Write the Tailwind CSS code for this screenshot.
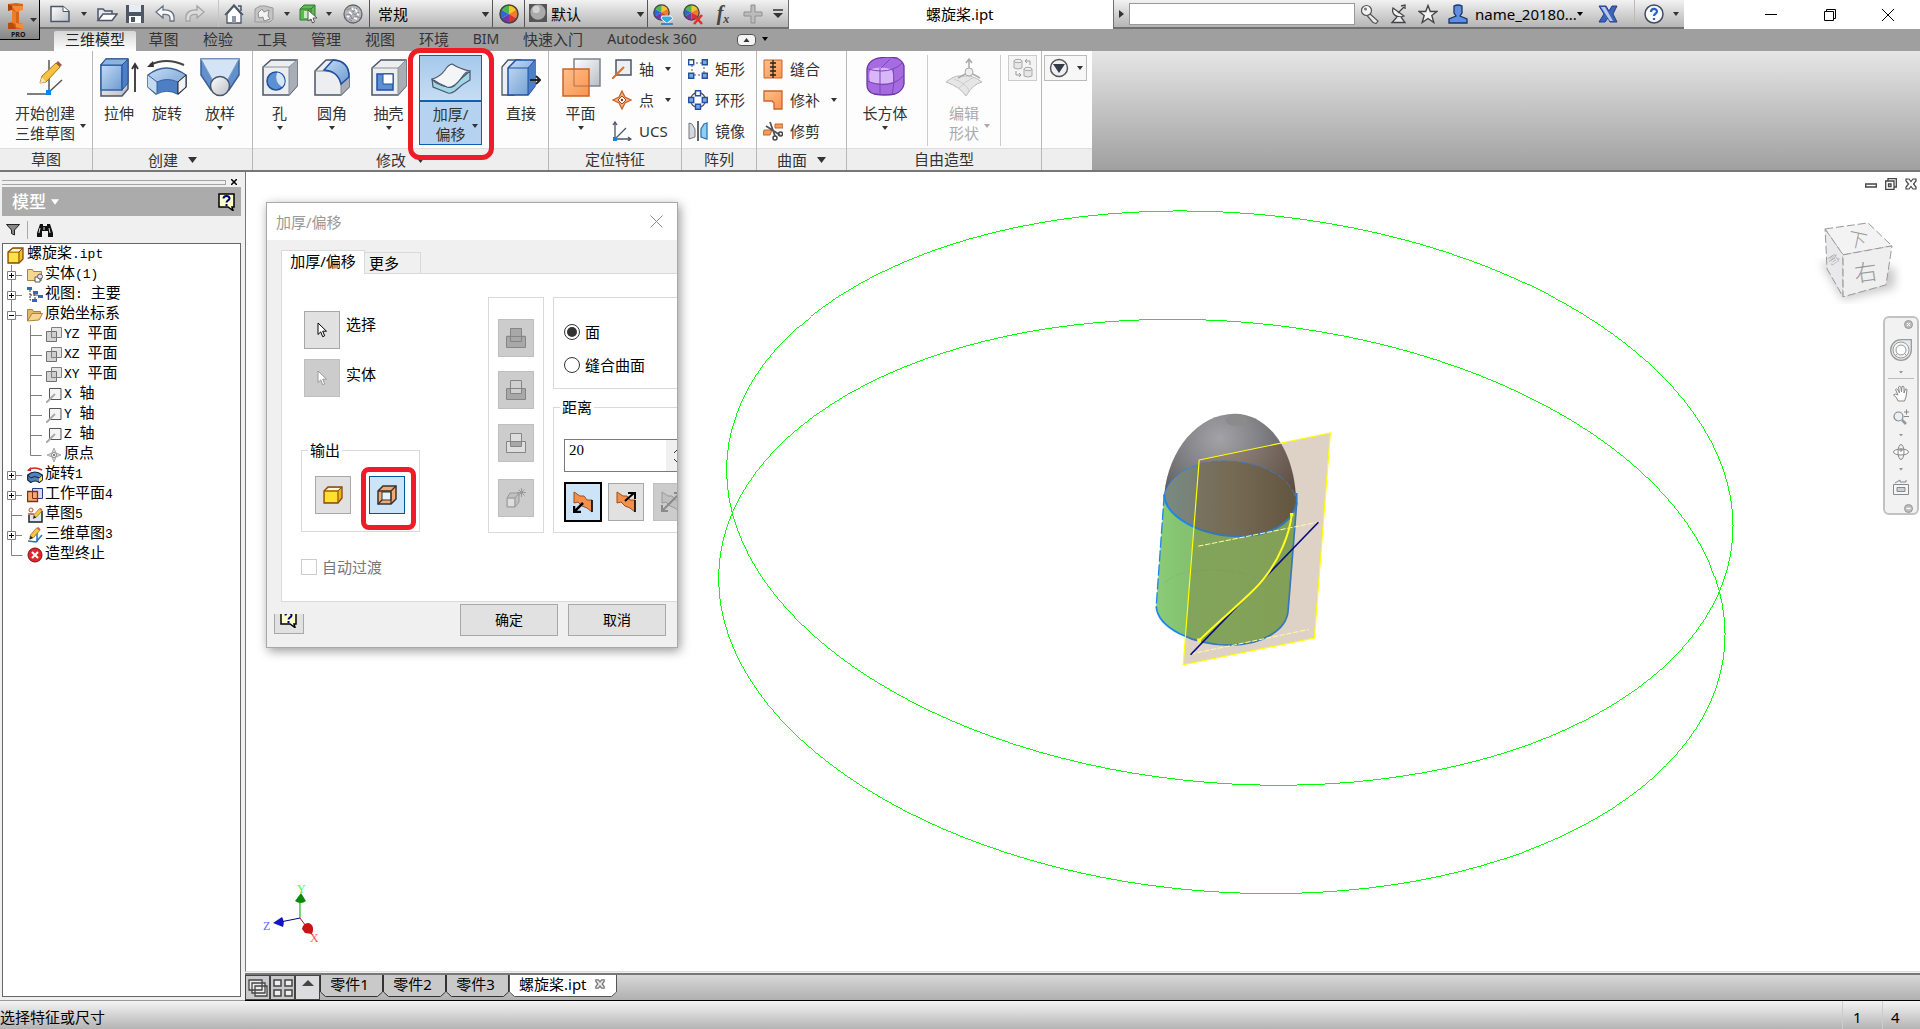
<!DOCTYPE html>
<html lang="zh-CN">
  <head>
    <meta charset="UTF-8" />
    <meta name="viewport" content="width=device-width, initial-scale=1.0" />
    <title>螺旋桨.ipt</title>
    <script src="https://cdn.jsdelivr.net/npm/@tailwindcss/browser@4"></script>
  </head>
  <body class="h-screen flex flex-col overflow-hidden bg-[#f0f0f0] text-[15px] leading-5 text-[#222] font-['Noto_Sans','Noto_Sans_CJK_SC',sans-serif]">
    <!-- shared icons -->
    <svg class="absolute w-0 h-0">
      <defs>
        <linearGradient id="blue" x1="0" y1="0" x2="1" y2="1"><stop offset="0" stop-color="#c4dcf5" /><stop offset="1" stop-color="#6d9ad0" /></linearGradient>
        <linearGradient id="gray" x1="0" y1="0" x2="1" y2="1"><stop offset="0" stop-color="#ffffff" /><stop offset="1" stop-color="#b9bdc4" /></linearGradient>
        <linearGradient id="orange" x1="0" y1="0" x2="1" y2="1"><stop offset="0" stop-color="#ffc08a" /><stop offset="1" stop-color="#f89450" /></linearGradient>
      </defs>
      <symbol id="down" viewBox="0 0 6 4"><path d="M0 0h6L3 4z" fill="currentColor" /></symbol>
      <symbol id="plus" viewBox="0 0 22 20"><path d="M8.500 0v6M8.500 14v6M12 10.500h7" stroke="#808080" /><path d="M4.500 6.500h8v8h-8z" fill="#fff" stroke="#808080" /><path d="M6 10.500h5M8.500 8v5" stroke="#000" /></symbol>
      <symbol id="minus" viewBox="0 0 22 20"><path d="M8.500 0v6M8.500 14v6M12 10.500h7" stroke="#808080" /><path d="M4.500 6.500h8v8h-8z" fill="#fff" stroke="#808080" /><path d="M6 10.500h5" stroke="#000" /></symbol>
      <symbol id="leaf" viewBox="0 0 22 20"><path d="M8.500 0v20M9 10.500h10" stroke="#808080" /></symbol>
      <symbol id="end" viewBox="0 0 22 20"><path d="M8.500 0v10.500h11" stroke="#808080" fill="none" /></symbol>
      <symbol id="child" viewBox="0 0 41 20"><path d="M8.500 0v20M27.500 0v20M28 10.500h11" stroke="#808080" /></symbol>
      <symbol id="child-end" viewBox="0 0 41 20"><path d="M8.500 0v20M27.500 0v10.500h11" stroke="#808080" fill="none" /></symbol>
      <symbol id="t-plane" viewBox="0 0 16 16"><path d="M5.500 .5h10v10h-10z" fill="#e4e4e4" stroke="#808080" /><path d="M.5 4.500h10v10H.5z" fill="#c8c8c8" fill-opacity=".8" stroke="#707070" /><path d="M5.500 4v6.500H11" stroke="#808080" fill="none" /></symbol>
      <symbol id="t-axis" viewBox="0 0 16 16"><path d="M3.500 1.500h11.500v11H3.500z" fill="#f4f4f4" stroke="#555" /><path d="M0 16l9-9" stroke="#aaa" stroke-width="2" /></symbol>
      <symbol id="pencil" viewBox="0 0 16 16"><path d="M4 9l7-8 3.500 3-7 8-4.500 2z" fill="#f8c83c" stroke="#8a5a10" stroke-width=".8" /><path d="M11 1l3.500 3 1-1.500L13 0z" fill="#c86450" /><path d="M3 14l1-4 3 2.500z" fill="#222" /></symbol>
      <symbol id="cursor" viewBox="0 0 10 16"><path d="M1 1v11.500l2.700-2.600 2 4.800 2-.9-2-4.600H9.500z" fill="#fff" stroke="currentColor" /></symbol>
      <symbol id="helpbook" viewBox="0 0 18 18"><path d="M1 1h15v13h-2l1 3.500L10 14H1z" fill="#ffffc8" stroke="#000" stroke-width="1.500" /><path d="M5.500 5.500c0-3.500 6-3.500 6 0 0 2-3 1.800-3 4M8.500 11v2" stroke="#00007f" stroke-width="2" fill="none" /></symbol>
      <symbol id="wheel" viewBox="0 0 20 20"><circle cx="10" cy="10" r="9" fill="#ddd" /><path d="M10 10V1a9 9 0 0 1 7.800 4.500z" fill="#f5c431" /><path d="M10 10l7.800-4.500a9 9 0 0 1 0 9z" fill="#ed7d2d" /><path d="M10 10l7.800 4.500A9 9 0 0 1 10 19z" fill="#d93030" /><path d="M10 10v9a9 9 0 0 1-7.800-4.500z" fill="#7138b0" /><path d="M10 10l-7.800 4.500a9 9 0 0 1 0-9z" fill="#2c68d8" /><path d="M10 10L2.200 5.500A9 9 0 0 1 10 1z" fill="#4db848" /><circle cx="10" cy="10" r="9" fill="none" stroke="#444" stroke-width="1.500" /></symbol>
      <symbol id="bool" viewBox="0 0 20 20"><path d="M.5 8.500h19v11H.5z" fill="none" stroke="#858585" /><path d="M4.500 .5h11v13h-11z" fill="none" stroke="#858585" /></symbol>
    </svg>

    <!-- title bar -->
    <header class="relative z-20 h-[29px] shrink-0 flex items-stretch bg-white">
      <button aria-label="应用程序菜单" class="absolute left-0 top-0 w-10 h-10 border border-black border-l-0 border-t-0 bg-linear-to-b from-[#dcdcdc] to-[#858585]">
        <svg viewBox="0 0 40 40" class="w-10 h-10">
          <path d="M8 4l8-1 7 1v6h-4v13l4 1v5H8v-6l4-1V10H8z" fill="#d9631d" /><path d="M8 4l4 2v4l-4 1z" fill="#a9420c" /><path d="M12 6h11v4l-7 2z" fill="#f58a38" /><path d="M12 10l4 2v12l-4-1z" fill="#ee7c2b" /><path d="M16 23l7 1v5l-7-2z" fill="#f58a38" /><path d="M8 23l5 0 3 6H8z" fill="#b84c10" />
          <path d="M30 18h7l-3.500 4z" fill="#333" />
          <text x="11" y="37" font-size="7" font-weight="bold" fill="#111">PRO</text>
        </svg>
      </button>
      <div class="w-[789px] pl-[46px] flex items-center bg-linear-to-b from-[#f2f2f2] to-[#b5b5b5] border-b-2 border-r border-[#707070]">
        <button aria-label="新建" class="w-7 flex justify-center"><svg viewBox="0 0 22 20" class="w-[22px] h-5"><path d="M2 2.500h12l6 5v10H2z" fill="url(#gray)" stroke="#4b5668" stroke-width="1.500" /><path d="M14 2.500v5h6" fill="#fff" stroke="#4b5668" /></svg></button>
        <button aria-label="新建选项" class="w-5 flex justify-center text-[#333]"><svg class="w-1.5 h-1"><use href="#down" /></svg></button>
        <button aria-label="打开" class="w-[26px] flex justify-center"><svg viewBox="0 0 22 20" class="w-[22px] h-5"><path d="M2 16V5h5l2 2h7v3" fill="#e5e8ee" stroke="#4b5668" stroke-width="1.500" /><path d="M2 16.500L7 10h14l-5 6.500z" fill="#fff" stroke="#4b5668" stroke-width="1.500" /></svg></button>
        <button aria-label="保存" class="w-[30px] flex justify-center"><svg viewBox="0 0 20 20" class="w-5 h-5"><path d="M1 1h18v18H1z" fill="#4c5664" /><path d="M4 1h12v7H4z" fill="#e8edf3" /><path d="M4 12h12v7H4z" fill="#fff" /><path d="M6 13h4v5H6z" fill="#4c5664" /></svg></button>
        <button aria-label="撤消" class="w-[30px] flex justify-center"><svg viewBox="0 0 20 20" class="w-5 h-5"><path d="M1 8l7-6v4c7-1 11 3 11 7v4h-4v-3c0-3-3-4-7-3.500V14z" fill="#f6f8fa" stroke="#6b7482" stroke-width="1.300" /></svg></button>
        <button aria-label="恢复" class="w-[30px] flex justify-center"><svg viewBox="0 0 20 20" class="w-5 h-5"><path d="M19 8l-7-6v4C5 5 1 9 1 13v4h4v-3c0-3 3-4 7-3.500V14z" fill="#dcdcdc" stroke="#a5a5a5" stroke-width="1.300" /></svg></button>
        <span class="w-[9px] h-full border-r border-[#c6c6c6]"></span>
        <button aria-label="主视图" class="w-[30px] flex justify-center"><svg viewBox="0 0 20 20" class="w-5 h-5"><path d="M3 10v9h14v-9l-7-8z" fill="#fff" stroke="#4b5668" stroke-width="1.300" /><path d="M1 11L10 1l9 10M14 2h3v5" stroke="#4b5668" stroke-width="1.500" fill="none" /><path d="M8 12h4v7H8z" fill="#8b96a8" /></svg></button>
        <button aria-label="更新" class="w-[30px] flex justify-center"><svg viewBox="0 0 20 20" class="w-5 h-5"><path d="M1 5l5-3h5l8 2v11l-3 3H1z" fill="#c4c4c4" stroke="#999" /><path d="M4 9l4-4 2 3 5-2-1 6 2 3-6 2-1-4-4 1z" fill="#f2f2f2" stroke="#8d8d8d" /></svg></button>
        <button aria-label="更新选项" class="w-4 flex justify-center text-[#333]"><svg class="w-1.5 h-1"><use href="#down" /></svg></button>
        <button aria-label="选择" class="w-[26px] flex justify-center"><svg viewBox="0 0 20 20" class="w-5 h-5"><path d="M2 5l4-4h11v11l-4 4H2z" fill="#5fb950" stroke="#2e7d32" /><path d="M2 5h11v11M13 5l4-4" stroke="#2e7d32" fill="none" /><path d="M6 7h5v7H6z" fill="#c9ebc2" /><path d="M10 6v11l3-2 1.500 4 2-1-1.500-4h4z" fill="#fff" stroke="#555" /></svg></button>
        <button aria-label="选择选项" class="w-4 flex justify-center text-[#333]"><svg class="w-1.5 h-1"><use href="#down" /></svg></button>
        <button aria-label="外观" class="w-8 flex justify-center"><svg viewBox="0 0 20 20" class="w-5 h-5"><circle cx="10" cy="10" r="9" fill="#b4b8bd" stroke="#666" stroke-width="1.300" /><path d="M4 6l4-2 2 4 4-4M3 11l4-1 2 5 4-3 4 2M8 8l4 3 4-3M6 15l3 2" stroke="#8a8a8a" fill="none" /><path d="M6 8l3 2M12 5l2 3M11 14l3 1M4 12l2 1M9 4l1 2M14 10l2 1" stroke="#fff" stroke-width="1.800" /></svg></button>
        <div class="relative w-[124px] h-full border-x border-[#555]">
          <select aria-label="材料" class="appearance-none w-full h-full pl-2 text-black"><option>常规</option></select>
          <svg class="absolute right-[2px] top-3 w-[9px] h-[5px] text-[#333] pointer-events-none"><use href="#down" /></svg>
        </div>
        <button aria-label="外观浏览器" class="w-[31px] flex justify-center"><svg class="w-5 h-5"><use href="#wheel" /></svg></button>
        <div class="relative w-[124px] h-full border-x border-[#555]">
          <select aria-label="外观" class="appearance-none w-full h-full pl-[26px] text-black"><option>默认</option></select>
          <svg viewBox="0 0 20 20" class="absolute left-[4px] top-1 w-[18px] h-[18px] pointer-events-none"><path d="M0 0h20v20H0z" fill="#555" /><circle cx="10" cy="9" r="8.500" fill="#aaa" /><circle cx="8" cy="6" r="4" fill="#d2d2d2" /></svg>
          <svg class="absolute right-[2px] top-3 w-[9px] h-[5px] text-[#333] pointer-events-none"><use href="#down" /></svg>
        </div>
        <button aria-label="调整外观" class="w-[30px] flex justify-center"><svg viewBox="0 0 22 22" class="w-[22px] h-[22px]"><use href="#wheel" width="17" height="17" x="1" y="1" /><path d="M10 13h9l2 2.500-6 5-6-5z" fill="#39a9e0" stroke="#fff" /><path d="M9 21h12" stroke="#1f6faf" stroke-width="1.500" /></svg></button>
        <button aria-label="清除外观" class="w-[30px] flex justify-center"><svg viewBox="0 0 22 22" class="w-[22px] h-[22px]"><use href="#wheel" width="17" height="17" x="1" y="1" /><path d="M12 12l8 9M20 12l-8 9" stroke="#d93232" stroke-width="2.500" /></svg></button>
        <button aria-label="参数" class="w-[30px] font-['Liberation_Serif',serif] italic font-bold text-[20px] text-[#444]">f<sub class="text-xs">x</sub></button>
        <button aria-label="添加" class="w-[30px] flex justify-center"><svg viewBox="0 0 20 20" class="w-5 h-5"><path d="M8 1h4v7h7v4h-7v7H8v-7H1V8h7z" fill="#bcbcbc" stroke="#8f8f8f" /></svg></button>
        <button aria-label="自定义" class="w-5 flex justify-center"><svg viewBox="0 0 10 9" class="w-[10px] h-[9px]"><path d="M0 1h10" stroke="#333" stroke-width="1.500" /><path d="M0 4h10L5 9z" fill="#333" /></svg></button>
      </div>
      <h1 class="flex-1 pl-[137px] pt-1 text-black whitespace-nowrap">螺旋桨.ipt</h1>
      <div class="w-[571px] flex items-center bg-linear-to-b from-[#f2f2f2] to-[#b5b5b5] border-b-2 border-l border-[#707070]">
        <button aria-label="展开搜索" class="w-[15px] flex justify-center"><svg viewBox="0 0 5 8" class="w-[5px] h-2"><path d="M0 0v8l5-4z" fill="#333" /></svg></button>
        <input aria-label="搜索" type="text" class="w-[226px] h-[22px] bg-white border border-[#999] px-1" />
        <button aria-label="登录密钥" class="w-[29px] flex justify-center"><svg viewBox="0 0 20 20" class="w-5 h-5"><path d="M9 9l9 8-2 2.500-3-1-6-7" fill="#e6e9ee" stroke="#555" stroke-width="1.200" /><circle cx="6.500" cy="6.500" r="5" fill="#f3f4f6" stroke="#555" stroke-width="1.200" /><circle cx="5.500" cy="5" r="1.500" fill="#777" /></svg></button>
        <button aria-label="通讯中心" class="w-[29px] flex justify-center"><svg viewBox="0 0 20 20" class="w-5 h-5"><path d="M4 4c-2 6 4 11 11 8z" fill="#f3f4f6" stroke="#444" stroke-width="1.300" /><path d="M9 9l6-6M12 2l4-1 0 4M8 13l-5 5.500h13L12 13" stroke="#444" fill="#e6e9ee" stroke-width="1.300" /></svg></button>
        <button aria-label="收藏夹" class="w-[30px] flex justify-center"><svg viewBox="0 0 20 20" class="w-5 h-5"><path d="M10 1.500l2.300 6H19l-5.200 4 2 7L10 14.500 4.200 18.500l2-7L1 7.500h6.700z" fill="#f3f4f6" stroke="#444" stroke-width="1.400" /></svg></button>
        <button class="flex items-center gap-[7px] w-[140px] pl-[5px] text-black whitespace-nowrap"><svg viewBox="0 0 20 20" class="w-5 h-5 shrink-0"><path d="M6 2q4-2 8 0v7l-2 3 7 3v4H1v-4l7-3-2-3z" fill="#5f8fe0" stroke="#1c3566" stroke-width="1.300" /></svg>name_20180...<svg class="w-1.5 h-1 -ml-[7px] shrink-0"><use href="#down" /></svg></button>
        <button aria-label="Exchange" class="w-[50px] flex justify-center"><svg viewBox="0 0 20 20" class="w-5 h-5"><path d="M1 2h7l3 5 3-5h5l-4 8 4 8h-7l-2-4-3 4H1l5-8z" fill="#3d62b8" stroke="#24408a" /><path d="M3 3h4l8 14h-3z" fill="#b9c9ee" /></svg></button>
        <span class="w-0.5 h-full border-r border-[#bbb]"></span>
        <button aria-label="帮助" class="w-[38px] flex justify-center"><svg viewBox="0 0 20 20" class="w-5 h-5"><circle cx="10" cy="10" r="9" fill="#f7f9fb" stroke="#444c5c" stroke-width="1.500" /><path d="M7 8c0-4 6-4 6-.5 0 2-3 2.300-3 4.500M10 14v2" stroke="#2962c4" stroke-width="2.200" fill="none" /></svg></button>
        <button aria-label="帮助选项" class="flex text-[#333]"><svg class="w-1.5 h-1"><use href="#down" /></svg></button>
      </div>
      <div class="w-[236px] flex justify-between pl-[81px] pr-[26px] items-center text-black">
        <button aria-label="最小化"><svg viewBox="0 0 12 12" class="w-3 h-3"><path d="M0 5.500h12" stroke="#000" /></svg></button>
        <button aria-label="还原"><svg viewBox="0 0 12 12" class="w-3 h-3"><path d="M.5 2.500h9v9h-9zM2.500 2.500v-2h9v9h-2" stroke="#000" fill="none" /></svg></button>
        <button aria-label="关闭"><svg viewBox="0 0 12 12" class="w-3 h-3"><path d="M0 0l12 12M12 0L0 12" stroke="#000" /></svg></button>
      </div>
    </header>

    <!-- ribbon tabs -->
    <nav class="h-[22px] shrink-0 flex items-end bg-[#9f9f9f] pl-[54px] text-[#333] whitespace-nowrap">
      <button class="w-[82px] h-5 pb-1 rounded-t-xs bg-linear-to-b from-[#d6d6d6] to-white text-[#222] flex items-center justify-center">三维模型</button>
      <button class="w-[55px] h-5 pb-1 flex items-center justify-center">草图</button>
      <button class="w-[54px] h-5 pb-1 flex items-center justify-center">检验</button>
      <button class="w-[54px] h-5 pb-1 flex items-center justify-center">工具</button>
      <button class="w-[54px] h-5 pb-1 flex items-center justify-center">管理</button>
      <button class="w-[54px] h-5 pb-1 flex items-center justify-center">视图</button>
      <button class="w-[54px] h-5 pb-1 flex items-center justify-center">环境</button>
      <button class="w-[50px] h-5 pb-1 flex items-center justify-center text-sm">BIM</button>
      <button class="w-[84px] h-5 pb-1 flex items-center justify-center">快速入门</button>
      <button class="w-[114px] h-5 pb-1 flex items-center justify-center text-sm">Autodesk 360</button>
      <button aria-label="最小化功能区" class="ml-7 mb-[5px] w-[19px] h-3 rounded-sm border border-[#555] bg-[#f4f4f4] flex items-center justify-center"><svg viewBox="0 0 6 4" class="w-[7px] h-1"><path d="M0 4h6L3 0z" fill="#333" /></svg></button>
      <button aria-label="功能区选项" class="ml-1.5 h-5 pb-1 text-black"><svg class="w-1.5 h-1"><use href="#down" /></svg></button>
    </nav>

    <!-- ribbon -->
    <section class="h-[121px] shrink-0 flex border-b-2 border-[#777] bg-linear-to-b from-[#e6e6e6] to-[#a0a0a0] text-[#333]">
      <div class="w-[93px] flex flex-col bg-[#fdfdfd] border-r border-[#b8b8b8]">
        <div class="flex-1 flex">
          <button class="relative w-[90px] pt-1.5 flex flex-col items-center">
            <svg viewBox="0 0 40 40" class="w-10 h-10"><path d="M24 3v34H2M24 35L37 23" stroke="#555" stroke-width="1.500" fill="none" /><path d="M15 26l2-7L31 6l4 4-14 15z" fill="#f5c242" stroke="#a9721b" /><path d="M31 6l2-2 4 4-2 2z" fill="#a05a4a" /><path d="M15 26l2-6 4 5z" fill="#f4e2c0" /><path d="M21 33h5v5h-5z" fill="#0a84e8" /></svg>
            <span class="mt-1.5">开始创建<br />三维草图</span>
            <svg class="absolute right-1 top-[73px] w-1.5 h-1"><use href="#down" /></svg>
          </button>
        </div>
        <h2 class="h-[22px] bg-[#eeeeee] border-t border-[#ddd] text-center">草图</h2>
      </div>

      <div class="w-40 flex flex-col bg-[#fdfdfd] border-r border-[#b8b8b8]">
        <div class="flex-1 flex items-start">
          <button class="w-[52px] pt-1.5 flex flex-col items-center"><svg viewBox="0 0 40 40" class="w-10 h-10"><path d="M2 8l5-6h22v30l-6 7H2z" fill="url(#gray)" stroke="#4b5668" stroke-width="1.500" /><path d="M2 8h21v25H2z" fill="url(#blue)" stroke="#2f62b0" stroke-width="1.500" /><path d="M2 8l5-6h22l-6 6z" fill="#8db4e0" stroke="#2350a0" /><path d="M23 8l6-6v24l-6 7z" fill="#4d7fc4" stroke="#2350a0" /><path d="M36 35V8M33 12l3-5 3 5" stroke="#333" stroke-width="1.800" fill="none" /></svg><span class="mt-1.5">拉伸</span></button>
          <button class="w-[44px] pt-1.5 flex flex-col items-center"><svg viewBox="0 0 40 40" class="w-10 h-10"><path d="M3 8q16-8 34 0" stroke="#444" stroke-width="2" fill="none" /><path d="M0 10l6-6 1 6z" fill="#333" /><path d="M1 18q18-14 38 0v12l-8 7q-11-6-22 0l-8-7z" fill="url(#blue)" stroke="#3a5f96" stroke-width="1.500" /><path d="M1 18l9 7v12l-9-7z" fill="#c4daf2" /><path d="M10 25q10-5 21 0v12q-10-6-21 0z" fill="#4d7fc4" /><path d="M1 18l9 7q10-5 21 0l8-7M10 25v12M31 25v12" stroke="#3a5f96" fill="none" /><path d="M31 25l8-7v12l-8 7z" fill="#f2f2f2" stroke="#222" /></svg><span class="mt-1.5">旋转</span></button>
          <button class="w-[62px] pt-1.5 flex flex-col items-center"><svg viewBox="0 0 40 40" class="w-10 h-10"><path d="M1 2h38v16L29 33H11L1 18z" fill="#6190cc" stroke="#3a5f96" stroke-width="1.500" /><path d="M1 2l12 22h14L39 2z" fill="#d3e4f6" stroke="#7d9dc8" /><circle cx="20" cy="29" r="9.500" fill="url(#gray)" stroke="#4b5668" stroke-width="1.500" /></svg><span class="mt-1.5">放样</span><svg class="mt-[3px] w-1.5 h-1"><use href="#down" /></svg></button>
        </div>
        <h2 class="h-[22px] bg-[#eeeeee] border-t border-[#ddd] flex items-center justify-center gap-2.5">创建 <svg class="w-[9px] h-1.5"><use href="#down" /></svg></h2>
      </div>

      <div class="relative w-[296px] flex flex-col bg-[#fdfdfd] border-r border-[#b8b8b8]">
        <div class="flex-1 flex items-start">
          <button class="w-[53px] pt-1.5 flex flex-col items-center"><svg viewBox="0 0 40 40" class="w-10 h-10"><path d="M3 10l8-7h26v26l-8 9H3z" fill="#eceef0" stroke="#4b5668" stroke-width="1.500" /><path d="M29 38V10l8-7v26z" fill="#a9adb5" /><path d="M3 10h26v28M29 10l8-7" stroke="#8b919c" fill="none" /><circle cx="16" cy="24" r="9" fill="#5d90d2" stroke="#1f4fa3" stroke-width="1.500" /><path d="M17 15.500a8.500 8.500 0 0 1 5 14.500q-8-5-5-14.500z" fill="#d5e6f8" /></svg><span class="mt-1.5">孔</span><svg class="mt-[3px] w-1.5 h-1"><use href="#down" /></svg></button>
          <button class="w-[52px] pt-1.5 flex flex-col items-center"><svg viewBox="0 0 40 40" class="w-10 h-10"><path d="M3 14L14 3h8q15 1 15 17v10l-8 8H3z" fill="#eceef0" stroke="#4b5668" stroke-width="1.500" /><path d="M29 38V27l8-7v10z" fill="#a9adb5" /><path d="M3 14h9q14 0 17 13v11" fill="none" stroke="#888" /><path d="M12 13L21 3q16 1 16 17l-8 7Q26 14 12 13z" fill="url(#blue)" stroke="#1f4fa3" stroke-width="1.500" /></svg><span class="mt-1.5">圆角</span><svg class="mt-[3px] w-1.5 h-1"><use href="#down" /></svg></button>
          <button class="w-[61px] pt-1.5 flex flex-col items-center"><svg viewBox="0 0 40 40" class="w-10 h-10"><path d="M3 11l9-8h25v26l-8 9H3z" fill="#eceef0" stroke="#4b5668" stroke-width="1.500" /><path d="M29 38V11l8-8v26z" fill="#a9adb5" /><path d="M3 11h26v27M29 11l8-8" stroke="#8b919c" fill="none" /><path d="M8 17h16v16H8z" fill="#5d90d2" stroke="#1f4fa3" stroke-width="1.500" /><path d="M14 17h10v10H14z" fill="#fff" stroke="#1f4fa3" /></svg><span class="mt-1.5">抽壳</span><svg class="mt-[3px] w-1.5 h-1"><use href="#down" /></svg></button>
          <button class="relative mt-1 w-[63px] h-[90px] flex flex-col items-center border border-[#0b62b4] bg-[#b5d3f0] text-[#333]">
            <span class="w-full h-[47px] pt-[3px] flex justify-center border-b-2 border-[#0b62b4] bg-linear-to-b from-[#a5c9ec] to-[#c6ddf3]"><svg viewBox="0 0 40 40" class="w-10 h-10"><path d="M1 20q4 6 16 8q3 1 6-1q7-8 16-15v9q-8 4-15 11-4 3-7 2L2 28z" fill="#9fd6e8" stroke="#4b5668" stroke-width="1.200" /><path d="M1 20q8-2 13-9 3-5 7-6 8 5 18 7-4 0-8 6-5 7-9 9-3 2-6 1Q8 25 1 20z" fill="#f4f5f6" stroke="#4b5668" stroke-width="1.200" /></svg></span>
            <span class="mt-0.5">加厚/<br />偏移</span>
            <svg class="absolute right-[3px] top-[68px] w-1.5 h-1"><use href="#down" /></svg>
            <span class="absolute z-10 -left-3 -right-[13px] -top-[8px] h-28 rounded-xl border-[5px] border-[#ee1c25] pointer-events-none"></span>
          </button>
          <button class="ml-3 w-[54px] pt-1.5 flex flex-col items-center"><svg viewBox="0 0 40 40" class="w-10 h-10"><path d="M1 10l6-7h12L13 9v29H1z" fill="#eceef1" stroke="#4b5668" stroke-width="1.300" /><path d="M7 11l8-8h19v26l-7 9H7z" fill="url(#blue)" stroke="#1f4fa3" stroke-width="1.500" /><path d="M27 11l7-8v26l-7 9z" fill="#4d7fc4" /><path d="M7 11h20v27M27 11l7-8" stroke="#1f4fa3" fill="none" /><path d="M29 23h10M35 19l4 4-4 4" stroke="#222" stroke-width="2" fill="none" /></svg><span class="mt-1.5">直接</span></button>
        </div>
        <h2 class="h-[22px] bg-[#eeeeee] border-t border-[#ddd] flex items-center justify-center gap-2.5">修改 <svg class="w-[9px] h-1.5"><use href="#down" /></svg></h2>
      </div>

      <div class="w-[133px] flex flex-col bg-[#fdfdfd] border-r border-[#b8b8b8]">
        <div class="flex-1 flex items-start">
          <button class="w-[63px] pt-1.5 flex flex-col items-center"><svg viewBox="0 0 40 40" class="w-10 h-10"><path d="M13 2h26v27H13z" fill="url(#gray)" stroke="#7a8494" stroke-width="1.500" /><path d="M2 12h26v27H2z" fill="url(#orange)" stroke="#c8642a" stroke-width="1.500" /><path d="M13 12v17h15" stroke="#a77350" fill="none" /></svg><span class="mt-1.5">平面</span><svg class="mt-[3px] w-1.5 h-1"><use href="#down" /></svg></button>
          <div class="pt-0.5">
            <button class="h-[31px] flex items-center gap-[7px]"><svg viewBox="0 0 20 20" class="w-5 h-5"><path d="M4 1h15v15H4z" fill="#eceef1" stroke="#4b5668" stroke-width="1.500" /><path d="M0 20L12 8" stroke="#d87030" stroke-width="2" /></svg>轴<svg class="ml-1 w-1.5 h-1"><use href="#down" /></svg></button>
            <button class="h-[31px] flex items-center gap-[7px]"><svg viewBox="0 0 20 20" class="w-5 h-5"><path d="M10 1l3 6 6 3-6 3-3 6-3-6-6-3 6-3z" fill="#fbb27c" stroke="#c8642a" stroke-width="1.300" /><path d="M10 6l4 4-4 4-4-4z" fill="#fff" stroke="#9a4a1a" /><circle cx="10" cy="10" r="1.200" fill="#7a3510" /></svg>点<svg class="ml-1 w-1.5 h-1"><use href="#down" /></svg></button>
            <button class="h-[31px] flex items-center gap-[7px]"><svg viewBox="0 0 20 20" class="w-5 h-5"><path d="M3 1v17h16M3 18L14 7M1 4l2-3 2 3M16 16l3 2-3 2" stroke="#4b5668" stroke-width="1.300" fill="none" /><path d="M1 16h4v4H1z" fill="#0a84e8" /></svg><span>UCS</span></button>
          </div>
        </div>
        <h2 class="h-[22px] bg-[#eeeeee] border-t border-[#ddd] text-center">定位特征</h2>
      </div>

      <div class="w-[75px] flex flex-col bg-[#fdfdfd] border-r border-[#b8b8b8]">
        <div class="flex-1 pt-0.5 pl-1.5">
          <button class="h-[31px] flex items-center gap-[7px]"><svg viewBox="0 0 20 20" class="w-5 h-5"><path d="M4 4h12v12H4z" fill="none" stroke="#555" stroke-dasharray="2 2" /><path d="M.7 .7h5v5h-5z" fill="#fff" stroke="#2350a0" stroke-width="1.400" /><path d="M14.300 .7h5v5h-5zM.7 14.300h5v5h-5zM14.300 14.300h5v5h-5z" fill="#7fa8dc" stroke="#2350a0" stroke-width="1.400" /></svg>矩形</button>
          <button class="h-[31px] flex items-center gap-[7px]"><svg viewBox="0 0 20 20" class="w-5 h-5"><circle cx="10" cy="10" r="7.500" fill="none" stroke="#555" stroke-width="1.300" /><path d="M7.500 .7h5v5h-5z" fill="#fff" stroke="#2350a0" stroke-width="1.400" /><path d="M.7 7.500h5v5h-5zM14.300 7.500h5v5h-5zM7.500 14.300h5v5h-5z" fill="#7fa8dc" stroke="#2350a0" stroke-width="1.400" /></svg>环形</button>
          <button class="h-[31px] flex items-center gap-[7px]"><svg viewBox="0 0 20 20" class="w-5 h-5"><path d="M1 2l3 1 3 5v8l-6 2z" fill="#d5d8de" stroke="#777" /><path d="M10 0v20" stroke="#333" stroke-width="1.500" /><path d="M19 2l-3 1-3 5v8l6 2z" fill="#8fd0f0" stroke="#2b78b8" stroke-width="1.300" /></svg>镜像</button>
        </div>
        <h2 class="h-[22px] bg-[#eeeeee] border-t border-[#ddd] text-center">阵列</h2>
      </div>

      <div class="w-[90px] flex flex-col bg-[#fdfdfd] border-r border-[#b8b8b8]">
        <div class="flex-1 pt-0.5 pl-1.5">
          <button class="h-[31px] flex items-center gap-[7px]"><svg viewBox="0 0 20 20" class="w-5 h-5"><path d="M1 1h18v18H1z" fill="url(#orange)" stroke="#c8642a" /><path d="M10 1v18M7 4h6M7 8h6M7 12h6M7 16h6" stroke="#222" stroke-width="1.300" /></svg>缝合</button>
          <button class="h-[31px] flex items-center gap-[7px]"><svg viewBox="0 0 20 20" class="w-5 h-5"><path d="M1 1h18v18h-8v-6l-2-2H1z" fill="url(#orange)" stroke="#c8642a" stroke-width="1.300" /></svg>修补<svg class="ml-1 w-1.5 h-1"><use href="#down" /></svg></button>
          <button class="h-[31px] flex items-center gap-[7px]"><svg viewBox="0 0 20 20" class="w-5 h-5"><path d="M12 3h8v4h-8zM1 9h8l-2 5H0z" fill="#f59a5a" stroke="#c8642a" /><path d="M7 1l5 14M3 5l14 9" stroke="#555" stroke-width="1.800" /><circle cx="12" cy="17" r="2" fill="none" stroke="#444" stroke-width="1.500" /><circle cx="17.500" cy="13" r="2" fill="none" stroke="#444" stroke-width="1.500" /></svg>修剪</button>
        </div>
        <h2 class="h-[22px] bg-[#eeeeee] border-t border-[#ddd] flex items-center justify-center gap-2.5">曲面 <svg class="w-[9px] h-1.5"><use href="#down" /></svg></h2>
      </div>

      <div class="w-[195px] flex flex-col bg-[#fdfdfd] border-r border-[#b8b8b8]">
        <div class="flex-1 flex items-start">
          <button class="w-[76px] pt-1.5 flex flex-col items-center"><svg viewBox="0 0 40 40" class="w-10 h-10"><path d="M10 2q10-3 22-1 6 3 7 8v18q-1 7-9 10-10 2-21 0-7-2-7-9V12q1-7 8-10z" fill="#a56bdf" stroke="#6a35a8" stroke-width="1.300" /><path d="M6 12q10-3 20 0 3 3 2 13-10 3-23 0-2-8 1-13z" fill="#d9b6fa" /><path d="M2 24q14 6 26 2 6-2 10-7M15 11v27M28 12q2 14-1 25M3 12q14 4 25 0 6-2 9-6M16 11l9-9" stroke="#7a48b4" fill="none" /></svg><span class="mt-1.5">长方体</span><svg class="mt-[3px] w-1.5 h-1"><use href="#down" /></svg></button>
          <span class="ml-1 mt-1 h-[91px] border-l border-[#ccc]"></span>
          <button disabled class="relative w-[72px] pt-1.5 flex flex-col items-center text-[#aaa]">
            <svg viewBox="0 0 40 40" class="w-10 h-10"><path d="M2 25q8-6 12-6h12q7 2 12 6-9 2-16 14-6-9-20-14z" fill="#e6e6e6" stroke="#bbb" /><path d="M10 22q12 4 16 13M30 20q-10 5-16 12" stroke="#ccc" fill="none" /><path d="M25 15V3M22 6l3-4 3 4M25 15l11 6M25 15l-11 6" stroke="#aaa" stroke-width="1.500" fill="none" /><circle cx="25" cy="15" r="4" fill="#eee" stroke="#aaa" /></svg>
            <span class="mt-1.5">编辑<br />形状</span>
            <svg class="absolute right-2.5 top-[73px] w-1.5 h-1"><use href="#down" /></svg>
          </button>
          <span class="mt-1 h-[91px] border-l border-[#ccc]"></span>
          <button aria-label="转换" disabled class="ml-[7px] mt-1 w-[29px] h-[26px] border border-[#ccc] bg-[#f4f4f4] flex items-center justify-center"><svg viewBox="0 0 20 20" class="w-5 h-5"><path d="M1 3v7q4 2 8 0V3M11 11v7q4 2 8 0v-7" fill="#e6e6e6" stroke="#aaa" /><ellipse cx="5" cy="3" rx="4" ry="1.700" fill="#eee" stroke="#aaa" /><ellipse cx="15" cy="11" rx="4" ry="1.700" fill="#eee" stroke="#aaa" /><path d="M12 3h5v4M14 1l-2 2 2 2M3 13v4h5M6 15l2 2-2 2" stroke="#999" fill="none" /></svg></button>
        </div>
        <h2 class="h-[22px] bg-[#eeeeee] border-t border-[#ddd] text-center">自由造型</h2>
      </div>

      <div class="w-[50px] flex flex-col bg-[#fdfdfd]">
        <div class="flex-1 pt-1 pl-0.5">
          <button aria-label="更多工具" class="w-[43px] h-[26px] border border-[#bbb] bg-[#f7f7f7] flex items-center justify-center gap-2"><svg viewBox="0 0 20 20" class="w-5 h-5"><circle cx="10" cy="10" r="8.500" fill="#eef0f3" stroke="#555" stroke-width="1.500" /><path d="M4 6h12l-6 9z" fill="#333b48" /></svg><svg class="w-1.5 h-1"><use href="#down" /></svg></button>
        </div>
        <div class="h-[22px] bg-[#eeeeee] border-t border-[#ddd]"></div>
      </div>
    </section>

    <div class="flex-1 min-h-0 flex">
      <!-- model browser -->
      <aside class="w-[245px] shrink-0 min-h-0 flex flex-col pt-[5px] pb-[3px] pl-0.5 pr-1 border-b border-[#999]">
        <div class="h-[10px] shrink-0 flex items-center gap-[5px]">
          <span class="flex-1 h-[5px] border border-[#a5a5a5] border-l-0"></span>
          <button aria-label="关闭面板" class="w-[10px]"><svg viewBox="0 0 6 6" class="w-1.5 h-1.5"><path d="M0 0l6 6M6 0L0 6" stroke="#000" stroke-width="1.500" /></svg></button>
        </div>
        <div class="h-[29px] shrink-0 flex items-center bg-[#ababab] pl-2.5 pr-[5px] text-white">
          <h2 class="text-[17px] font-medium">模型</h2>
          <svg class="ml-[5px] w-2 h-1.5"><use href="#down" /></svg>
          <button aria-label="帮助" class="ml-auto"><svg class="w-[18px] h-[18px]"><use href="#helpbook" /></svg></button>
        </div>
        <div class="h-[27px] shrink-0 flex items-center pl-1">
          <button aria-label="过滤器"><svg viewBox="0 0 14 12" class="w-3.5 h-3"><path d="M.5 .5h13L8.500 6v5l-3-1.500V6z" fill="#888" stroke="#222" /></svg></button>
          <span class="ml-[7px] h-[18px] border-l border-[#aaa]"></span>
          <button aria-label="查找" class="ml-[9px]"><svg viewBox="0 0 16 14" class="w-4 h-3.5"><path d="M3 1h3v2h4V1h3l3 9v4h-5V8H5v6H0v-4z" fill="#111" /><path d="M3 5l-1 5M12 5l1 5M7 4v3" stroke="#ddd" /></svg></button>
        </div>
        <ul class="flex-1 min-h-0 overflow-hidden bg-white border border-[#666] text-black font-['Liberation_Mono','Noto_Sans_CJK_SC',monospace]">
          <li class="h-5 mt-px pl-1 flex items-center gap-[3px]"><svg viewBox="0 0 17 17" class="w-[17px] h-[17px]"><path d="M1 5l5-4h10v11l-4 4H1z" fill="#f3c21e" stroke="#8a4b10" stroke-width="1.300" /><path d="M1 5h11v11M12 5l4-4" fill="none" stroke="#8a4b10" /><path d="M2 6h9v9H2z" fill="#ffe24a" /><path d="M3 4.500L6 2h8l-2.500 2.500z" fill="#fff8d0" /></svg><span>螺旋桨<span class="text-[13px]">.ipt</span></span></li>
          <li class="h-5 flex items-center gap-0.5"><svg class="w-[22px] h-5"><use href="#plus" /></svg><svg viewBox="0 0 16 16" class="w-4 h-4"><path d="M.5 2.500h5l1 2h8v9H.5z" fill="#f5d590" stroke="#a98240" /><path d="M8 10h5v5H8z" fill="#fff" stroke="#556" /><circle cx="13" cy="9.500" r="2.500" fill="#dde" stroke="#556" /></svg><span>实体<span class="text-[13px]">(1)</span></span></li>
          <li class="h-5 flex items-center gap-0.5"><svg class="w-[22px] h-5"><use href="#plus" /></svg><svg viewBox="0 0 16 16" class="w-4 h-4"><path d="M3 3v10h4M3 8h9M8 4v9" stroke="#333" fill="none" stroke-dasharray="2 1" /><path d="M0 0h5v3H0zM6 4h5v3H6zM11 8h5v3h-5zM5 12h5v3H5z" fill="#3465c0" /></svg><span>视图<span class="text-[13px] whitespace-pre">: </span>主要</span></li>
          <li class="h-5 flex items-center gap-0.5"><svg class="w-[22px] h-5"><use href="#minus" /></svg><svg viewBox="0 0 16 16" class="w-4 h-4"><path d="M.5 14V2.500h5l1 2h7V7" fill="#e3b765" stroke="#a98240" /><path d="M.5 14L5 6.500h10.500L12 13z" fill="#f5d590" stroke="#a98240" /></svg><span>原始坐标系</span></li>
          <li class="h-5 flex items-center gap-0.5"><svg class="w-[41px] h-5"><use href="#child" /></svg><svg class="w-4 h-4"><use href="#t-plane" /></svg><span><span class="text-[13px] whitespace-pre">YZ </span>平面</span></li>
          <li class="h-5 flex items-center gap-0.5"><svg class="w-[41px] h-5"><use href="#child" /></svg><svg class="w-4 h-4"><use href="#t-plane" /></svg><span><span class="text-[13px] whitespace-pre">XZ </span>平面</span></li>
          <li class="h-5 flex items-center gap-0.5"><svg class="w-[41px] h-5"><use href="#child" /></svg><svg class="w-4 h-4"><use href="#t-plane" /></svg><span><span class="text-[13px] whitespace-pre">XY </span>平面</span></li>
          <li class="h-5 flex items-center gap-0.5"><svg class="w-[41px] h-5"><use href="#child" /></svg><svg class="w-4 h-4"><use href="#t-axis" /></svg><span><span class="text-[13px] whitespace-pre">X </span>轴</span></li>
          <li class="h-5 flex items-center gap-0.5"><svg class="w-[41px] h-5"><use href="#child" /></svg><svg class="w-4 h-4"><use href="#t-axis" /></svg><span><span class="text-[13px] whitespace-pre">Y </span>轴</span></li>
          <li class="h-5 flex items-center gap-0.5"><svg class="w-[41px] h-5"><use href="#child" /></svg><svg class="w-4 h-4"><use href="#t-axis" /></svg><span><span class="text-[13px] whitespace-pre">Z </span>轴</span></li>
          <li class="h-5 flex items-center gap-0.5"><svg class="w-[41px] h-5"><use href="#child-end" /></svg><svg viewBox="0 0 16 16" class="w-4 h-4"><path d="M8 1l2 5 5 2-5 2-2 5-2-5-5-2 5-2z" fill="#d5d5d5" stroke="#aaa" /><circle cx="8" cy="8" r="2.500" fill="#fff" stroke="#888" /><circle cx="8" cy="8" r="1" fill="#555" /></svg><span>原点</span></li>
          <li class="h-5 flex items-center gap-0.5"><svg class="w-[22px] h-5"><use href="#plus" /></svg><svg viewBox="0 0 16 16" class="w-4 h-4"><path d="M1 3q6-4 14 0" stroke="#d22" stroke-width="1.500" fill="none" /><path d="M0 4l4-4v4z" fill="#d22" /><path d="M.7 8q7-6 14.600 0v5l-3 2.500q-4-3-8.500 0L.7 13z" fill="#4f83c0" stroke="#123" stroke-width="1.200" /><path d="M12 10l3-2v5l-3 2z" fill="#ffe23a" /><path d="M.7 8l3 3q4-3 8.500 0l3-3" stroke="#123" fill="none" /></svg><span>旋转<span class="text-[13px]">1</span></span></li>
          <li class="h-5 flex items-center gap-0.5"><svg class="w-[22px] h-5"><use href="#plus" /></svg><svg viewBox="0 0 16 16" class="w-4 h-4"><path d="M5.500 1.500h10v10h-10z" fill="#d5dcf0" stroke="#223a80" /><path d="M.5 4.500h10v10H.5z" fill="#f8a870" stroke="#7a3510" stroke-width="1.300" /><path d="M5.500 4.500v7H11" stroke="#7a3510" fill="none" /></svg><span>工作平面<span class="text-[13px]">4</span></span></li>
          <li class="h-5 flex items-center gap-0.5"><svg class="w-[22px] h-5"><use href="#leaf" /></svg><svg viewBox="0 0 16 16" class="w-4 h-4"><path d="M2 8v7h13V4" stroke="#222" stroke-width="1.500" fill="#dbe6f5" /><circle cx="4" cy="3" r="2" fill="#fff" stroke="#c05030" /><path d="M1 7h6" stroke="#c05030" stroke-width="1.500" /><use href="#pencil" x="4" y="1" width="12" height="12" /></svg><span>草图<span class="text-[13px]">5</span></span></li>
          <li class="h-5 flex items-center gap-0.5"><svg class="w-[22px] h-5"><use href="#plus" /></svg><svg viewBox="0 0 16 16" class="w-4 h-4"><path d="M1 14l8 1 6-7M10 5v10" stroke="#2b6fc8" stroke-width="1.500" fill="none" /><use href="#pencil" width="14" height="14" /></svg><span>三维草图<span class="text-[13px]">3</span></span></li>
          <li class="h-5 flex items-center gap-0.5"><svg class="w-[22px] h-5"><use href="#end" /></svg><svg viewBox="0 0 16 16" class="w-4 h-4"><circle cx="8" cy="8" r="7" fill="#e0262c" stroke="#7d1014" /><path d="M5 5l6 6M11 5l-6 6" stroke="#fff" stroke-width="2" /></svg><span>造型终止</span></li>
        </ul>
      </aside>

      <main class="flex-1 min-w-0 flex flex-col">
        <div class="relative flex-1 min-h-0 bg-white border-l border-[#777] border-b border-b-[#ddd]">
          <!-- model canvas -->
          <svg viewBox="246 172 1674 800" class="w-full h-full">
            <defs>
              <radialGradient id="dome" cx=".42" cy=".2" r=".75"><stop offset="0" stop-color="#a2a2a8" /><stop offset=".4" stop-color="#828286" /><stop offset="1" stop-color="#4c4848" /></radialGradient>
              <linearGradient id="cut" x1="0" y1="0" x2="1" y2="0"><stop offset="0" stop-color="#7a8a82" /><stop offset=".5" stop-color="#747668" /><stop offset="1" stop-color="#5b5849" /></linearGradient>
              <linearGradient id="body" x1="0" y1="0" x2="1" y2="0"><stop offset="0" stop-color="#8ccb78" /><stop offset=".2" stop-color="#84c270" /><stop offset="1" stop-color="#85bd68" /></linearGradient>
              <filter id="soft"><feGaussianBlur stdDeviation="5" /></filter>
            </defs>
            <g fill="none" stroke="#00ff00" shape-rendering="crispEdges">
              <ellipse cx="1230" cy="498.500" rx="505" ry="285.500" transform="rotate(4.700 1230 498.500)" />
              <ellipse cx="1222" cy="607" rx="505" ry="285.500" transform="rotate(4.700 1222 607)" />
            </g>
            <g transform="translate(1120 380) scale(.33333)">
              <path d="M133 345L109 680C112 745 220 797 330 797C430 797 500 750 505 695L531 370z" fill="url(#body)" />
              <path d="M133 345C145 210 235 102 345 102C450 102 530 220 529 375C520 430 450 470 360 470C240 470 135 410 133 345z" fill="url(#dome)" />
              <path d="M133 345C150 285 220 244 315 244C420 244 520 290 531 370C520 430 450 470 360 470C240 470 135 410 133 345z" fill="url(#cut)" />
              <ellipse cx="351" cy="122" rx="33" ry="18" fill="#8b8b8b" />
              <path d="M133 345C150 285 220 244 315 244C420 244 520 290 531 370" fill="none" stroke="#2f86e0" stroke-width="3" stroke-dasharray="22 8" />
              <path d="M135 610C170 570 300 555 400 590C460 605 490 630 505 650" fill="none" stroke="#7cb57c" stroke-width="2" stroke-dasharray="30 8" />
              <path d="M133 345C135 410 240 470 360 470C450 470 520 430 531 370" fill="none" stroke="#1d86ee" stroke-width="6" />
              <path d="M133 345L109 680" stroke="#1d86ee" stroke-width="4" stroke-dasharray="34 8" />
              <path d="M109 680C112 745 220 797 330 797C430 797 500 750 505 695L531 370V340" fill="none" stroke="#1d86ee" stroke-width="5" />
              <path d="M238 241L632 160L584 776L190 856z" fill="#7a4a20" fill-opacity=".25" stroke="#ffff00" stroke-width="3.500" />
              <path d="M235 500L595 428M212 824L567 750" stroke="#ffff9a" stroke-width="3" stroke-dasharray="16 5" />
              <path d="M212 826L596 428" stroke="#0a0a80" stroke-width="5" />
              <path d="M238 783C300 720 380 660 430 600C480 540 510 460 516 405" fill="none" stroke="#ffff20" stroke-width="6" />
              <path d="M232 777h12v12h-12zM511 400h10v10h-10z" fill="#ffff20" />
            </g>
            <!-- origin triad -->
            <g font-family="Liberation Serif" font-size="12">
              <path d="M299 919v-22" stroke="#00a000" /><path d="M294 902l6-8 5 8q-5 4-11 0z" fill="#0a8a0a" /><text x="296" y="894" fill="#3cff3c">Y</text>
              <path d="M299 919l-20 4" stroke="#00008b" /><path d="M272 924l9-6q3 5 1 10z" fill="#1414c0" /><text x="262" y="931" fill="#6464ff">Z</text>
              <path d="M299 919l6 8" stroke="#c00000" /><path d="M301 930q1-6 7-6 5 2 4 8l-1 3-7-1z" fill="#c81414" /><text x="309" y="943" fill="#ff5050">X</text>
            </g>
            <!-- view cube -->
            <path d="M1822 262l22 38 52-12v-20z" fill="#888" opacity=".45" filter="url(#soft)" />
            <g stroke="#999" stroke-dasharray="8 3" stroke-linejoin="round">
              <path d="M1826 229l43-6 24 23-49 9z" fill="#f3f3f4" /><path d="M1826 229l18 26v42l-16-28z" fill="#e9e9eb" /><path d="M1844 255l49-9-6 39-43 12z" fill="#efeff0" />
            </g>
            <g font-family="Noto Sans CJK SC" font-weight="300" fill="#999">
              <text x="1855" y="281" font-size="23" transform="rotate(-8 1866 272)">右</text>
              <text x="1849" y="247" font-size="19" transform="rotate(12 1858 240)">下</text>
              <text x="1829" y="264" font-size="11" transform="rotate(55 1835 260)">前</text>
            </g>
          </svg>

          <div class="absolute right-[3px] top-1.5 flex items-center gap-2">
            <button aria-label="最小化文档"><svg viewBox="0 0 12 12" class="w-3 h-3"><path d="M.7 6h10.600v3H.7z" fill="#fff" stroke="#444" stroke-width="1.300" /></svg></button>
            <button aria-label="还原文档"><svg viewBox="0 0 12 12" class="w-3 h-3"><path d="M3 3V.7h8.300V9H9M.7 3H9v8.300H.7zM3.500 6h2.500v2.500H3.500z" fill="#fff" stroke="#444" stroke-width="1.300" /></svg></button>
            <button aria-label="关闭文档"><svg viewBox="0 0 12 12" class="w-3 h-3"><path d="M1 1h3l2 2.500L8 1h3v2L8.500 6 11 9v2H8L6 8.500 4 11H1V9l2.500-3L1 3z" fill="#fff" stroke="#444" stroke-width="1.200" /></svg></button>
          </div>

          <!-- navigation bar -->
          <div class="absolute right-px top-[144px] w-9 h-[199px] rounded-md border-2 border-[#c2c2c2] bg-[#f2f2f2] flex flex-col items-center text-[#999]">
            <button aria-label="关闭导航栏" class="self-end mr-1 mt-0.5"><svg viewBox="0 0 9 9" class="w-[9px] h-[9px]"><circle cx="4.500" cy="4.500" r="4" fill="#bbb" stroke="#999" /><path d="M3 3l3 3M6 3L3 6" stroke="#fff" /></svg></button>
            <button aria-label="全导航控制盘" class="mt-2.5"><svg viewBox="0 0 22 22" class="w-[22px] h-[22px]"><path d="M11 .7h10.300V11a10.300 10.300 0 1 1-10.300-10.300z" fill="#e6e8ea" stroke="#999" stroke-width="1.300" /><circle cx="11" cy="11" r="8" fill="#f4f5f6" stroke="#999" /><circle cx="11" cy="11" r="5" fill="#fff" stroke="#999" /><path d="M5 17l2.500-2.500M17 17l-2.500-2.500" stroke="#999" /></svg></button>
            <svg class="mt-[10px] w-1.5 h-1"><use href="#down" /></svg>
            <span class="mt-1 w-[26px] border-t border-[#bbb]"></span>
            <button aria-label="平移" class="mt-1.5"><svg viewBox="0 0 16 17" class="w-4 h-[17px]"><path d="M5 16q-1-4-4.500-6Q2 8 5 10L2.500 4.500Q3.500 3 5 5l1.500 3-1-6Q7 .5 7.800 2l.7 5 .5-5.500Q10.500.5 11 2v6l1.500-4q1.500-.5 1.500 1l-1 7-1.500 4z" fill="#fff" stroke="#888" /></svg></button>
            <button aria-label="缩放" class="mt-[7px]"><svg viewBox="0 0 16 16" class="w-4 h-4"><circle cx="5.500" cy="7.500" r="4.500" fill="#e6f0f6" stroke="#888" stroke-width="1.200" /><path d="M9 11l4 4" stroke="#999" stroke-width="2.500" /><path d="M11 3h5M13.500 .5v5M11 7.500h5" stroke="#888" /></svg></button>
            <svg class="mt-[9px] w-1.5 h-1"><use href="#down" /></svg>
            <button aria-label="动态观察" class="mt-2"><svg viewBox="0 0 16 16" class="w-4 h-4"><ellipse cx="8" cy="8" rx="7.500" ry="3" fill="#fff" stroke="#888" /><ellipse cx="8" cy="8" rx="3" ry="7.500" fill="none" stroke="#888" /><path d="M6 6h4M8 4v4" stroke="#888" /></svg></button>
            <svg class="mt-2 w-1.5 h-1"><use href="#down" /></svg>
            <button aria-label="观察方向" class="mt-2"><svg viewBox="0 0 16 16" class="w-4 h-4"><path d="M.5 5.500h15v10H.5z" fill="#f6f6f6" stroke="#888" /><path d="M4 8.500h8v4H4z" fill="#c8d2d6" stroke="#888" /><path d="M2 4l5-3v2h6V1" stroke="#888" fill="none" /></svg></button>
            <button aria-label="导航栏选项" class="self-end mr-1 mt-[9px]"><svg viewBox="0 0 9 9" class="w-[9px] h-[9px]"><circle cx="4.500" cy="4.500" r="4" fill="#bbb" stroke="#999" /><path d="M2.500 4.500h4" stroke="#fff" stroke-width="1.500" /></svg></button>
          </div>

          <!-- thicken / offset dialog -->
          <form class="absolute left-5 top-[30px] w-[412px] border border-[#a8a8a8] bg-[#f0f0f0] shadow-[2px_3px_10px_rgba(0,0,0,0.4)] overflow-hidden text-black" onsubmit="return false">
            <div class="h-[37px] bg-white flex items-center justify-between pl-[9px] pr-3.5 text-[#999]">
              <h2>加厚/偏移</h2>
              <button type="button" aria-label="关闭"><svg viewBox="0 0 13 13" class="w-[13px] h-[13px]"><path d="M.5 .5l12 12M12.500 .5l-12 12" stroke="#888" /></svg></button>
            </div>
            <div class="pl-3.5 pt-2.5">
              <div class="flex items-end">
                <button type="button" class="relative z-10 -mb-px w-[84px] h-6 pb-1 bg-white border border-b-0 border-[#d9d9d9] leading-5">加厚/偏移</button>
                <button type="button" class="w-14 h-[21px] border border-b-0 border-l-0 border-[#d9d9d9] pl-1 text-left leading-5">更多</button>
              </div>
              <div class="h-[329px] bg-white border border-r-0 border-[#d9d9d9] pt-[23px] flex items-start">
                <div class="w-[206px] pl-[19px] pt-3.5">
                  <div class="pl-[3px] flex flex-col gap-2.5">
                    <div class="flex gap-1.5"><button type="button" id="pick" class="w-9 h-[38px] border border-[#a8a8a8] bg-[#e1e1e1] flex items-center justify-center"><svg class="w-[10px] h-4"><use href="#cursor" /></svg></button><label for="pick" class="mt-[3px]">选择</label></div>
                    <div class="flex gap-1.5"><button type="button" id="solid" disabled class="w-9 h-[38px] border border-[#bfbfbf] bg-[#cccccc] flex items-center justify-center text-[#999]"><svg class="w-[10px] h-4"><use href="#cursor" /></svg></button><label for="solid" class="mt-[5px]">实体</label></div>
                  </div>
                  <fieldset class="mt-[43px] w-[119px] h-[92px] border border-[#d9d9d9] pl-[13px] pt-4">
                    <legend class="-ml-[7px] px-0.5 h-5">输出</legend>
                    <div class="flex gap-[18px]">
                      <button type="button" aria-label="实体输出" class="w-9 h-[38px] border border-[#a8a8a8] bg-[#e1e1e1] flex items-center justify-center"><svg viewBox="0 0 20 18" class="w-5 h-[18px]"><path d="M1 5l4-4h14v11l-4 5H1z" fill="#f0b518" stroke="#8a4b10" stroke-width="1.300" /><path d="M1 5h14v12M15 5l4-4" stroke="#8a4b10" fill="none" /><path d="M2 6h12v10H2z" fill="#ffdf32" /><path d="M3 4l3-2h11l-2 2z" fill="#fffbe0" /></svg></button>
                      <button type="button" aria-label="曲面输出" class="relative w-9 h-[38px] border border-[#00569d] bg-[#cce4f7] flex items-center justify-center"><svg viewBox="0 0 20 20" class="w-5 h-5"><path d="M1 6l5-5h13v13l-5 5H1z" fill="#f5a870" stroke="#333" stroke-width="1.500" /><path d="M4 7h10v9l-2 2H2V8z" fill="#f5a870" /><path d="M5 7h9v8H5z" fill="#e8f2fb" stroke="#333" /><path d="M1 6h13v13M14 6l5-5M1 19l4-4" fill="none" stroke="#333" stroke-width="1.300" /></svg><span class="absolute -left-[9px] -top-[10px] w-[55px] h-[63px] rounded-lg border-[5px] border-[#ee1c25] pointer-events-none"></span></button>
                    </div>
                  </fieldset>
                  <label class="mt-[25px] flex items-center gap-[5px] text-[#777]"><input type="checkbox" disabled class="appearance-none w-4 h-4 border border-[#ccc] bg-white" />自动过渡</label>
                </div>
                <div class="w-14 h-[236px] border border-[#d9d9d9] pt-[21px] flex flex-col items-center">
                  <button type="button" aria-label="求并" disabled class="w-9 h-[38px] border border-[#bfbfbf] bg-[#cccccc] flex items-center justify-center"><svg viewBox="0 0 20 20" class="w-5 h-5"><path d="M.5 7.500h19v12H.5zM4.500 .5h11v8h-11z" fill="#a8a8a8" /><use href="#bool" /></svg></button>
                  <button type="button" aria-label="求差" disabled class="mt-3.5 w-9 h-[38px] border border-[#bfbfbf] bg-[#cccccc] flex items-center justify-center"><svg viewBox="0 0 20 20" class="w-5 h-5"><path d="M.5 8.500h19v11H.5z" fill="#a8a8a8" /><path d="M4.500 .5h11v13h-11z" fill="#d0d0d0" /><use href="#bool" /></svg></button>
                  <button type="button" aria-label="求交" disabled class="mt-[15px] w-9 h-[38px] border border-[#bfbfbf] bg-[#cccccc] flex items-center justify-center"><svg viewBox="0 0 20 20" class="w-5 h-5"><path d="M.5 8.500h19v11H.5zM4.500 .5h11v8h-11z" fill="#dedede" /><path d="M4.500 8.500h11v5h-11z" fill="#a8a8a8" /><use href="#bool" /></svg></button>
                  <button type="button" aria-label="新建实体" disabled class="mt-[17px] w-9 h-[38px] border border-[#bfbfbf] bg-[#cccccc] flex items-center justify-center"><svg viewBox="0 0 20 20" class="w-5 h-5"><path d="M1 10l3-5h9v9l-4 5H1z" fill="#c0c0c0" stroke="#999" /><path d="M1 10h8v9M9 10l4-5" fill="none" stroke="#999" /><path d="M2 11h6v7H2z" fill="#dedede" /><path d="M15.500 0v9M11 4.500h9M12.500 1.500l6 6M18.500 1.500l-6 6" stroke="#999" /></svg></button>
                </div>
                <div class="ml-[9px] flex-1 min-w-0">
                  <fieldset class="h-[92px] min-w-0 border border-r-0 border-[#d9d9d9] pl-2.5 pt-[17px]">
                    <label class="h-[33px] flex items-center gap-[5px]"><input type="radio" name="kind" checked class="appearance-none w-4 h-4 rounded-full border border-[#333] bg-[#333] bg-clip-content p-0.5" />面</label>
                    <label class="h-[33px] flex items-center gap-[5px] whitespace-nowrap"><input type="radio" name="kind" class="appearance-none w-4 h-4 rounded-full border border-[#333] bg-white" />缝合曲面</label>
                  </fieldset>
                  <fieldset class="mt-2 h-[136px] min-w-0 border border-r-0 border-[#d9d9d9] pl-2.5 overflow-hidden">
                    <legend class="-ml-1 px-0.5 h-5"><label for="distance">距离</label></legend>
                    <div class="mt-[22px] h-[33px] border border-r-0 border-[#7a7a7a] flex">
                      <input id="distance" type="text" value="20" class="w-[101px] h-5 px-1 font-['Liberation_Serif',serif]" />
                      <button type="button" aria-label="距离选项" class="w-3 h-full bg-[#f0f0f0] flex items-center justify-end"><svg viewBox="0 0 3 12" class="w-[3px] h-3"><path d="M0 3l3-3M0 9l3 3" stroke="#333" /></svg></button>
                    </div>
                    <div class="mt-[10px] flex items-center gap-1.5">
                      <button type="button" aria-label="正向" class="shrink-0 w-[38px] h-10 border-2 border-black bg-[#cce4f7] flex items-center justify-center"><svg viewBox="0 0 20 22" class="w-5 h-[22px]"><path d="M1 1l6 4 4 0 3 4 5 0v12l-5-4-5-2-4-4-4 1z" fill="#f2914e" stroke="#a04c14" /><path d="M19 9v12" stroke="#000" stroke-width="1.500" /><path d="M1 21l9-9M1 15v6h7" stroke="#000" stroke-width="2.500" fill="none" /></svg></button>
                      <button type="button" aria-label="反向" class="shrink-0 w-9 h-[38px] border border-[#a8a8a8] bg-[#e1e1e1] flex items-center justify-center"><svg viewBox="0 0 20 22" class="w-5 h-[22px]"><path d="M1 1l6 4 4 0 3 4 5 0v12l-5-4-5-2-4-4-4 1z" fill="#f2914e" stroke="#a04c14" /><path d="M19 9v12" stroke="#000" stroke-width="1.500" /><path d="M9 10l9-8M12 2h7v6" stroke="#000" stroke-width="2" fill="none" /></svg></button>
                      <button type="button" aria-label="对称" disabled class="ml-[3px] shrink-0 w-9 h-[38px] border border-[#bfbfbf] bg-[#cccccc] flex items-center justify-center"><svg viewBox="0 0 20 22" class="w-5 h-[22px]"><path d="M1 1l6 4 4 0 3 4 5 0v12l-5-4-5-2-4-4-4 1z" fill="#c0c0c0" stroke="#999" /><path d="M1 20L19 2M1 14v6h6M13 2h6v6" stroke="#8a8a8a" stroke-width="2" fill="none" /></svg></button>
                    </div>
                  </fieldset>
                </div>
              </div>
            </div>
            <div class="h-[45px] pl-[7px] pr-[11px] pt-0.5 flex items-start gap-2.5 text-sm">
              <button type="button" aria-label="帮助" class="mt-2.5 w-[30px] h-5 border border-t-0 border-[#a8a8a8] bg-[#e1e1e1] flex justify-center overflow-hidden mr-auto"><svg class="-mt-1 shrink-0 w-[18px] h-[18px]"><use href="#helpbook" /></svg></button>
              <button type="submit" class="w-[98px] h-8 border border-[#a8a8a8] bg-[#e1e1e1]">确定</button>
              <button type="button" class="w-[98px] h-8 border border-[#a8a8a8] bg-[#e1e1e1]">取消</button>
            </div>
          </form>
        </div>

        <!-- document tabs -->
        <div class="h-7 shrink-0 mt-px flex items-start border-t-2 border-[#777] border-b-[#000] border-b bg-linear-to-b from-[#d8d8d8] to-[#b0b0b0] text-black">
          <button aria-label="层叠" class="w-[25px] h-[25px] border border-[#444] bg-[#c9c9cb] flex items-center justify-center"><svg viewBox="0 0 20 20" class="w-5 h-5"><path d="M1 2h13v10H1zM4 5h13v10H4zM7 8h12v10H7z" fill="#eee" stroke="#444" stroke-width="1.300" /></svg></button>
          <button aria-label="平铺" class="w-[25px] h-[25px] border border-[#444] bg-[#c9c9cb] flex items-center justify-center"><svg viewBox="0 0 20 20" class="w-5 h-5"><path d="M1 2h7v6H1zM12 2h7v6h-7zM1 12h7v6H1zM12 12h7v6h-7z" fill="#eee" stroke="#444" stroke-width="1.500" /></svg></button>
          <button aria-label="文档列表" class="w-[25px] h-[25px] border border-[#444] bg-[#dcdcde] flex justify-center pt-1"><svg viewBox="0 0 12 6" class="w-3 h-1.5"><path d="M0 6h12L6 0z" fill="#444" /></svg></button>
          <button class="relative w-[63px] h-[22px] pb-1 pr-1 leading-[18px]"><svg viewBox="0 0 63 22" preserveAspectRatio="none" class="absolute inset-0 w-full h-full"><path d="M.5 0v17l5 4.500h52l5-4.500V0" fill="#c9c9c9" stroke="#333" /></svg><span class="relative">零件1</span></button>
          <button class="relative w-[63px] h-[22px] pb-1 pr-1 leading-[18px]"><svg viewBox="0 0 63 22" preserveAspectRatio="none" class="absolute inset-0 w-full h-full"><path d="M.5 0v17l5 4.500h52l5-4.500V0" fill="#c9c9c9" stroke="#333" /></svg><span class="relative">零件2</span></button>
          <button class="relative w-[63px] h-[22px] pb-1 pr-1 leading-[18px]"><svg viewBox="0 0 63 22" preserveAspectRatio="none" class="absolute inset-0 w-full h-full"><path d="M.5 0v17l5 4.500h52l5-4.500V0" fill="#c9c9c9" stroke="#333" /></svg><span class="relative">零件3</span></button>
          <button class="relative w-[108px] h-[22px] pb-1 flex items-center pl-2.5 gap-2 leading-[18px]"><svg viewBox="0 0 108 22" preserveAspectRatio="none" class="absolute inset-0 w-full h-full"><path d="M.5 0v17l5 4.500h97l5-4.500V0" fill="#fff" stroke="#555" /></svg><span class="relative">螺旋桨.ipt</span><svg viewBox="0 0 12 12" class="relative w-[10px] h-[10px]"><path d="M1 1h3l2 2.500L8 1h3v2L8.500 6 11 9v2H8L6 8.500 4 11H1V9l2.500-3L1 3z" fill="#eee" stroke="#777" stroke-width="1.500" /></svg></button>
        </div>
      </main>
    </div>

    <footer class="h-7 shrink-0 flex items-center bg-linear-to-b from-[#f4f4f4] to-[#b4b4b4] text-black">
      <p class="flex-1 pt-1">选择特征或尺寸</p>
      <p class="w-10 h-full pt-1.5 pl-2.5 border-l border-[#ccc]">1</p>
      <p class="w-[38px] h-full pt-1.5 pl-2 border-l border-[#ccc]">4</p>
    </footer>
  </body>
</html>
